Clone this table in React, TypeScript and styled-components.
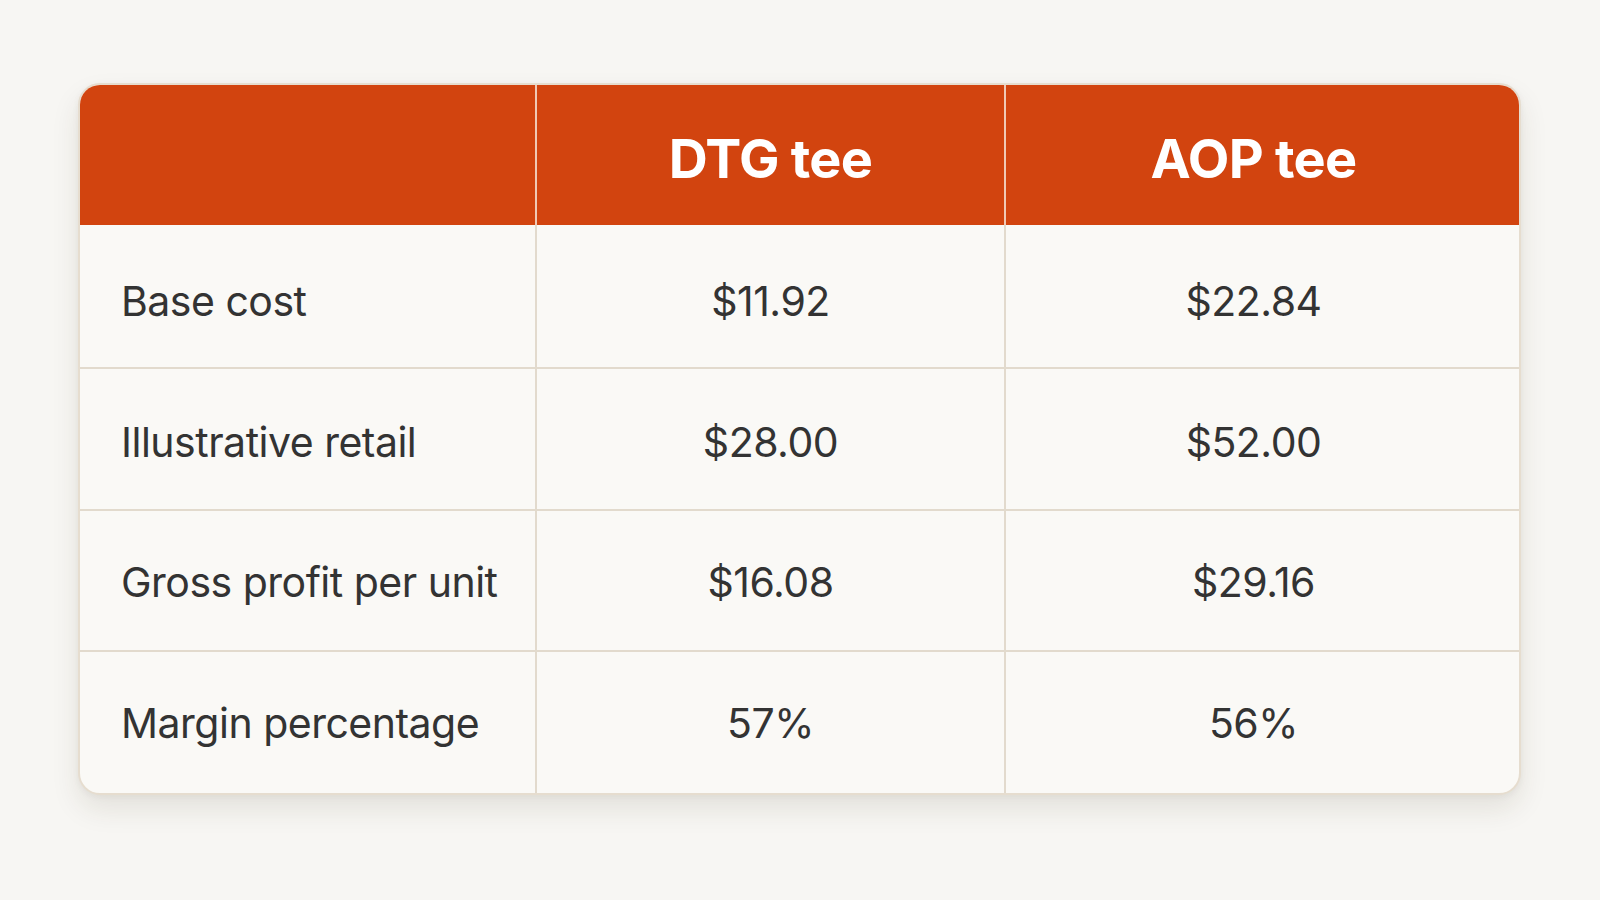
import React from 'react';
import styled, { createGlobalStyle } from 'styled-components';

interface Row {
  label: string;
  dtg: string;
  aop: string;
  shift: number;
}

const rows: Row[] = [
  { label: 'Base cost', dtg: '$11.92', aop: '$22.84', shift: 9 },
  { label: 'Illustrative retail', dtg: '$28.00', aop: '$52.00', shift: 5 },
  { label: 'Gross profit per unit', dtg: '$16.08', aop: '$29.16', shift: 3 },
  { label: 'Margin percentage', dtg: '57%', aop: '56%', shift: 0 },
];

const GlobalStyle = createGlobalStyle`
  html, body {
    margin: 0;
    padding: 0;
    background: #f7f6f3;
  }
  body {
    font-family: Inter, "Noto Sans", "Liberation Sans", sans-serif;
    -webkit-font-smoothing: antialiased;
  }
`;

const Page = styled.div`
  width: 1600px;
  height: 900px;
  box-sizing: border-box;
  padding: 83px 0 0 78px;
`;

const Table = styled.div`
  width: 1439px;
  display: grid;
  grid-template-columns: 457px 469px 1fr;
  grid-template-rows: 140px 144px 142px 141px 141px;
  background: #faf9f6;
  border: 2px solid #e6ddcf;
  border-radius: 22px;
  overflow: hidden;
  box-shadow: 0 14px 28px rgba(60, 45, 20, 0.1), 0 2px 6px rgba(60, 45, 20, 0.05);
`;

const HeadCell = styled.div<{ $last?: boolean }>`
  background: #d2440f;
  color: #ffffff;
  display: flex;
  align-items: center;
  justify-content: center;
  padding: 6px ${p => (p.$last ? '18px' : '0')} 0 0;
  font-size: 54px;
  font-weight: 700;
  letter-spacing: -0.7px;
  border-right: ${p => (p.$last ? 'none' : '2px solid #f0c9b5')};
`;

const Cell = styled.div<{ $label?: boolean; $last?: boolean; $bottom?: boolean; $shift: number }>`
  display: flex;
  align-items: center;
  justify-content: ${p => (p.$label ? 'flex-start' : 'center')};
  padding: ${p => p.$shift}px ${p => (p.$last ? '18px' : '0')} 0 ${p => (p.$label ? '41px' : '0')};
  color: #333333;
  font-size: 41px;
  font-weight: 400;
  letter-spacing: -0.5px;
  border-right: ${p => (p.$last ? 'none' : '2px solid #e2dacd')};
  border-bottom: ${p => (p.$bottom ? 'none' : '2px solid #e2dacd')};
`;

export default function App() {
  return (
    <>
      <GlobalStyle />
      <Page>
        <Table>
          <HeadCell />
          <HeadCell>DTG tee</HeadCell>
          <HeadCell $last>AOP tee</HeadCell>
          {rows.map((row, i) => {
            const bottom = i === rows.length - 1;
            return (
              <React.Fragment key={row.label}>
                <Cell $label $bottom={bottom} $shift={row.shift}>{row.label}</Cell>
                <Cell $bottom={bottom} $shift={row.shift}>{row.dtg}</Cell>
                <Cell $last $bottom={bottom} $shift={row.shift}>{row.aop}</Cell>
              </React.Fragment>
            );
          })}
        </Table>
      </Page>
    </>
  );
}
